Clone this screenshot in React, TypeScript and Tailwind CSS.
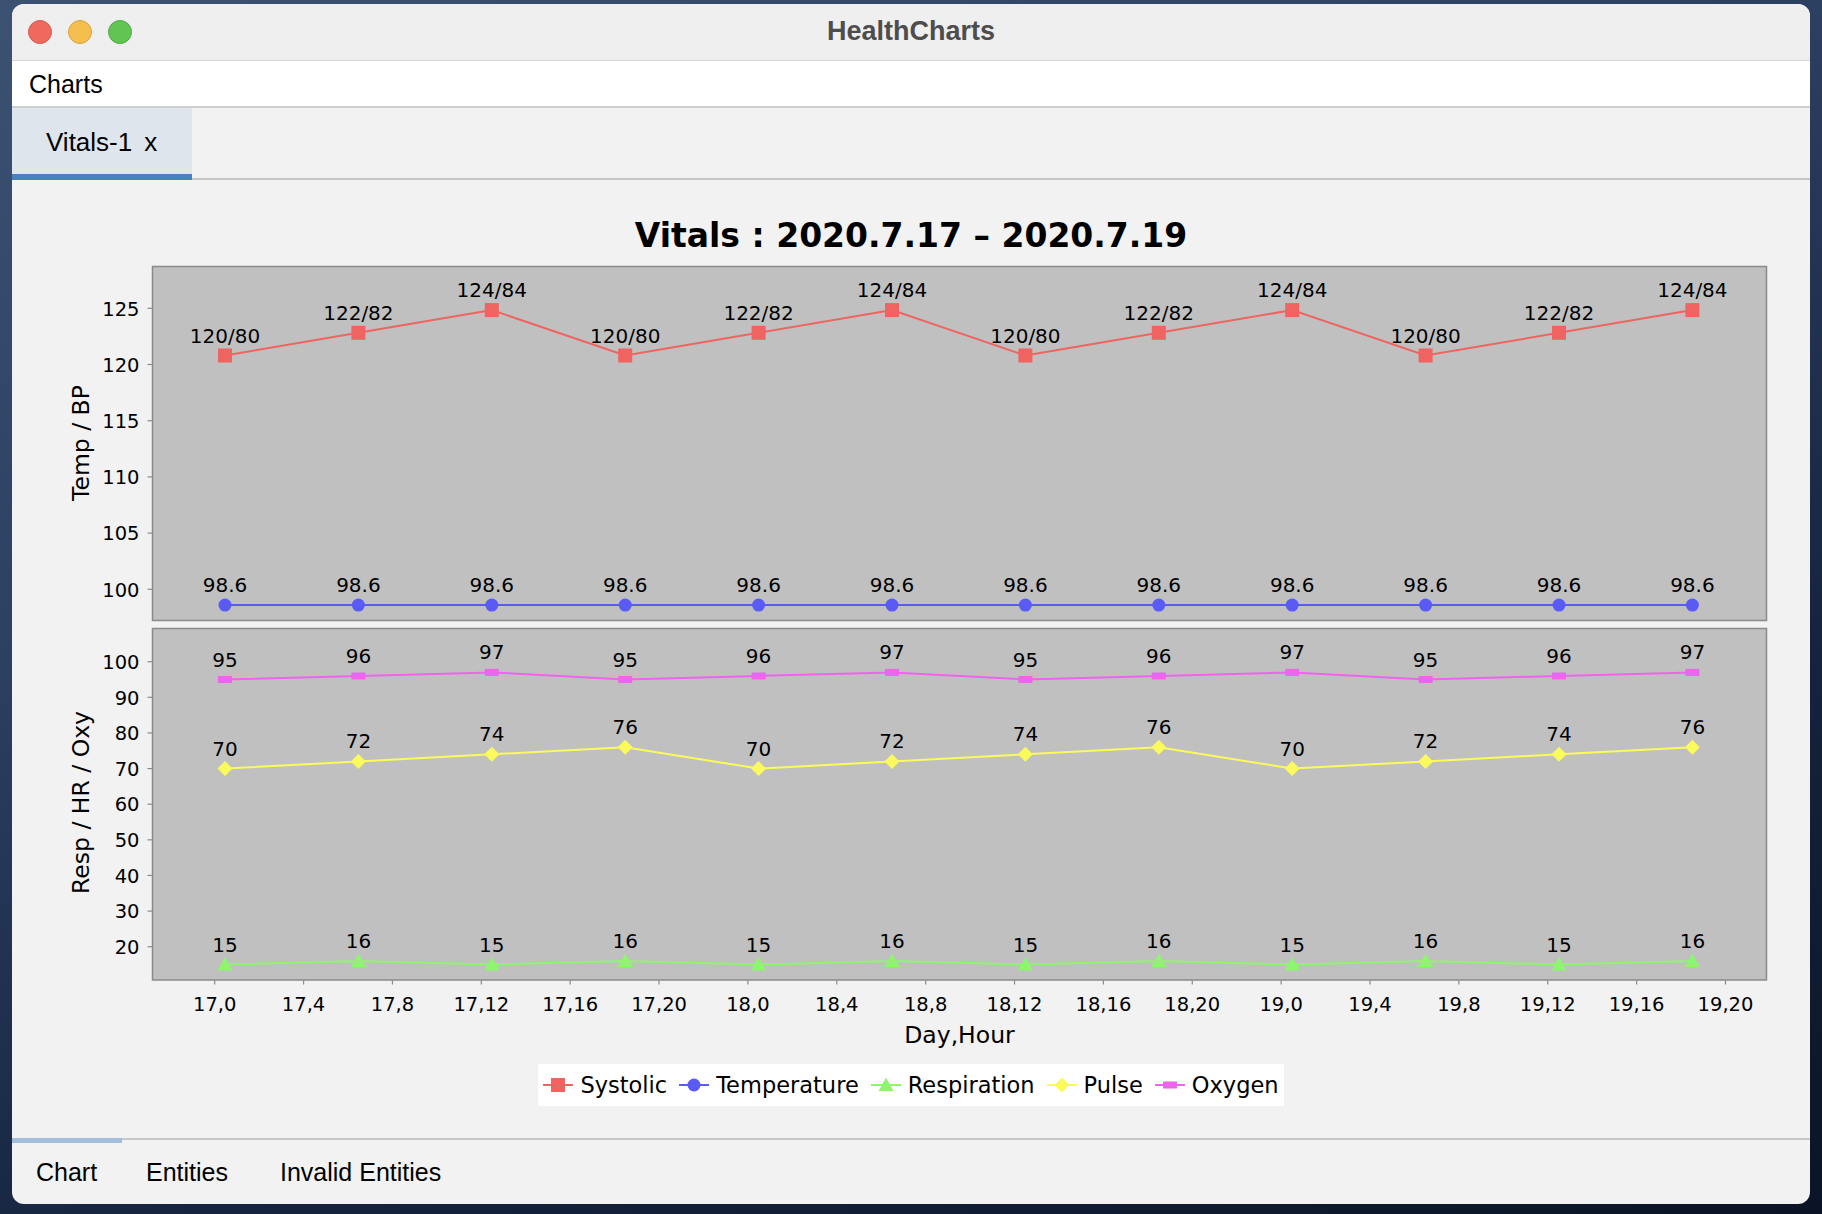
import React from "react";

const RED = "#ef6461";
const BLUE = "#5a5af6";
const GREEN = "#8ef56e";
const YELLOW = "#fafa5c";
const MAGENTA = "#ee64ee";

const PX = Array.from({ length: 12 }, (_, i) => 225 + i * 133.4);
const yU = (v: number) => 589.3 - (v - 100) * 11.24;
const yL = (v: number) => 661.7 + (100 - v) * 3.5625;

type Shape = "sq" | "ci" | "tr" | "di" | "re";

function Marker({ s, x, y, c }: { s: Shape; x: number; y: number; c: string }) {
  if (s === "sq") return <rect x={x - 7} y={y - 7} width={14} height={14} fill={c} />;
  if (s === "ci") return <circle cx={x} cy={y} r={6.5} fill={c} />;
  if (s === "tr")
    return <polygon points={`${x},${y - 7.5} ${x + 7.5},${y + 6} ${x - 7.5},${y + 6}`} fill={c} />;
  if (s === "di")
    return (
      <polygon
        points={`${x},${y - 7.5} ${x + 7.5},${y} ${x},${y + 7.5} ${x - 7.5},${y}`}
        fill={c}
      />
    );
  return <rect x={x - 7} y={y - 3.5} width={14} height={7} fill={c} />;
}

function Series({
  vals,
  labels,
  yf,
  color,
  shape,
}: {
  vals: number[];
  labels: string[];
  yf: (v: number) => number;
  color: string;
  shape: Shape;
}) {
  const pts = vals.map((v, i) => [PX[i], yf(v)] as const);
  return (
    <g>
      <polyline
        points={pts.map((p) => `${p[0]},${p[1]}`).join(" ")}
        fill="none"
        stroke={color}
        strokeWidth={2}
      />
      {pts.map((p, i) => (
        <Marker key={i} s={shape} x={p[0]} y={p[1]} c={color} />
      ))}
      {pts.map((p, i) => (
        <text key={"t" + i} x={p[0]} y={p[1] - 13} fontSize={20} textAnchor="middle" fill="#000">
          {labels[i]}
        </text>
      ))}
    </g>
  );
}

const sysV = [120.8, 122.82, 124.84];
const sysL = ["120/80", "122/82", "124/84"];
const rep = <T,>(arr: T[], n: number) => Array.from({ length: n }, (_, i) => arr[i % arr.length]);

const systolic = rep(sysV, 12);
const systolicL = rep(sysL, 12);
const temp = rep([98.6], 12);
const tempL = rep(["98.6"], 12);
const oxy = rep([95, 96, 97], 12);
const pulse = rep([70, 72, 74, 76], 12);
const resp = rep([15, 16], 12);

const upperTicks = [100, 105, 110, 115, 120, 125];
const lowerTicks = [20, 30, 40, 50, 60, 70, 80, 90, 100];
const xTicks = Array.from({ length: 18 }, (_, i) => ({
  x: 214.7 + i * 88.87,
  label: `${17 + Math.floor(i / 6)},${(i % 6) * 4}`,
}));

function Chart() {
  return (
    <svg
      width={1798}
      height={800}
      viewBox="12 256 1798 800"
      className="block font-['DejaVu_Sans',sans-serif]"
    >
      {/* upper plot */}
      <rect x={152.5} y={266.5} width={1614} height={354} fill="#c0c0c0" stroke="#8a8a8a" strokeWidth={1.5} />
      {upperTicks.map((t) => (
        <g key={t}>
          <line x1={147.5} x2={152.5} y1={yU(t)} y2={yU(t)} stroke="#8a8a8a" strokeWidth={1.2} />
          <text x={139.5} y={yU(t) + 7.2} fontSize={19.5} textAnchor="end" fill="#000">
            {t}
          </text>
        </g>
      ))}
      <Series vals={systolic} labels={systolicL} yf={yU} color={RED} shape="sq" />
      <Series vals={temp} labels={tempL} yf={yU} color={BLUE} shape="ci" />
      <text transform="translate(88.5,443) rotate(-90)" fontSize={23.5} textAnchor="middle" fill="#000">
        Temp / BP
      </text>

      {/* lower plot */}
      <rect x={152.5} y={628.5} width={1614} height={351.5} fill="#c0c0c0" stroke="#8a8a8a" strokeWidth={1.5} />
      {lowerTicks.map((t) => (
        <g key={t}>
          <line x1={147.5} x2={152.5} y1={yL(t)} y2={yL(t)} stroke="#8a8a8a" strokeWidth={1.2} />
          <text x={139.5} y={yL(t) + 7.2} fontSize={19.5} textAnchor="end" fill="#000">
            {t}
          </text>
        </g>
      ))}
      <Series vals={resp} labels={resp.map(String)} yf={yL} color={GREEN} shape="tr" />
      <Series vals={pulse} labels={pulse.map(String)} yf={yL} color={YELLOW} shape="di" />
      <Series vals={oxy} labels={oxy.map(String)} yf={yL} color={MAGENTA} shape="re" />
      <text transform="translate(88.5,802.5) rotate(-90)" fontSize={23.5} textAnchor="middle" fill="#000">
        Resp / HR / Oxy
      </text>

      {/* x axis */}
      {xTicks.map((t) => (
        <g key={t.label}>
          <line x1={t.x} x2={t.x} y1={980.5} y2={984.5} stroke="#8a8a8a" strokeWidth={1.2} />
          <text x={t.x} y={1010.7} fontSize={19.5} textAnchor="middle" fill="#000">
            {t.label}
          </text>
        </g>
      ))}
      <text x={959.5} y={1043.3} fontSize={23.5} textAnchor="middle" fill="#000">
        Day,Hour
      </text>
    </svg>
  );
}

const legendItems: { name: string; color: string; shape: Shape }[] = [
  { name: "Systolic", color: RED, shape: "sq" },
  { name: "Temperature", color: BLUE, shape: "ci" },
  { name: "Respiration", color: GREEN, shape: "tr" },
  { name: "Pulse", color: YELLOW, shape: "di" },
  { name: "Oxygen", color: MAGENTA, shape: "re" },
];

function Legend() {
  return (
    <div className="mt-[8px] h-[42px] bg-white flex items-center px-[5px] font-['DejaVu_Sans',sans-serif] text-[22.5px] text-black">
      {legendItems.map((it, i) => (
        <div key={it.name} className={i < legendItems.length - 1 ? "flex items-center mr-[12px]" : "flex items-center"}>
          <svg width={30} height={16} viewBox="0 0 30 16" className="block">
            <line x1={0} x2={30} y1={8} y2={8} stroke={it.color} strokeWidth={2} />
            <Marker s={it.shape} x={15} y={8} c={it.color} />
          </svg>
          <span className="ml-[7px] leading-[28px]">{it.name}</span>
        </div>
      ))}
    </div>
  );
}

export default function App() {
  return (
    <div className="w-[1822px] h-[1214px] overflow-hidden pt-[4px] pl-[12px] bg-[linear-gradient(160deg,#3c5273_0%,#2c4062_35%,#15233d_70%,#0b1426_100%)]">
      <div className="w-[1798px] h-[1200px] rounded-[12px] overflow-hidden bg-[#f2f2f2] flex flex-col font-['Liberation_Sans',Arial,sans-serif] text-black">
        {/* title bar */}
        <div className="h-[57px] shrink-0 bg-[#efefef] border-b border-[#d6d6d6] grid grid-cols-[1fr_auto_1fr] items-center">
          <div className="flex items-center gap-[16px] pl-[16px]">
            <div className="w-[24px] h-[24px] rounded-full bg-[#ee6a5e] border border-[#d65a4f]" />
            <div className="w-[24px] h-[24px] rounded-full bg-[#f5bf4f] border border-[#d9a441]" />
            <div className="w-[24px] h-[24px] rounded-full bg-[#61c554] border border-[#50a943]" />
          </div>
          <div className="text-[27px] font-bold text-[#4d4d4d] leading-[30px] pb-[3px]">HealthCharts</div>
          <div />
        </div>

        {/* menu bar */}
        <div className="h-[47px] shrink-0 bg-white border-b-2 border-[#cecece] flex items-center pl-[17px]">
          <span className="text-[25px] leading-[28px]">Charts</span>
        </div>

        {/* tab bar */}
        <div className="h-[72px] shrink-0 flex border-b-2 border-[#c5c5c5]">
          <div className="h-[72px] w-[180px] bg-[#dfe5ec] border-b-[6px] border-[#4a7fc0] flex items-center pl-[34px] pt-[2px]">
            <span className="text-[26px] leading-[28px]">
              Vitals-1<span className="ml-[12px]">x</span>
            </span>
          </div>
        </div>

        {/* chart content */}
        <div className="flex-1 flex flex-col items-center bg-[#f2f2f2]">
          <div className="mt-[36px] h-[40px] leading-[40px] text-[33px] font-bold font-['DejaVu_Sans',sans-serif]">
            Vitals : 2020.7.17 – 2020.7.19
          </div>
          <Chart />
          <Legend />
        </div>

        {/* bottom tabs */}
        <div className="relative h-[66px] shrink-0 border-t-2 border-[#c6c6c6] flex items-center text-[25px]">
          <div className="absolute -top-[2px] left-0 w-[110px] h-[5px] bg-[#a3bedb]" />
          <div className="w-[110px] pl-[24px] leading-[28px]">Chart</div>
          <div className="w-[134px] pl-[24px] leading-[28px]">Entities</div>
          <div className="pl-[24px] leading-[28px]">Invalid Entities</div>
        </div>
      </div>
    </div>
  );
}
